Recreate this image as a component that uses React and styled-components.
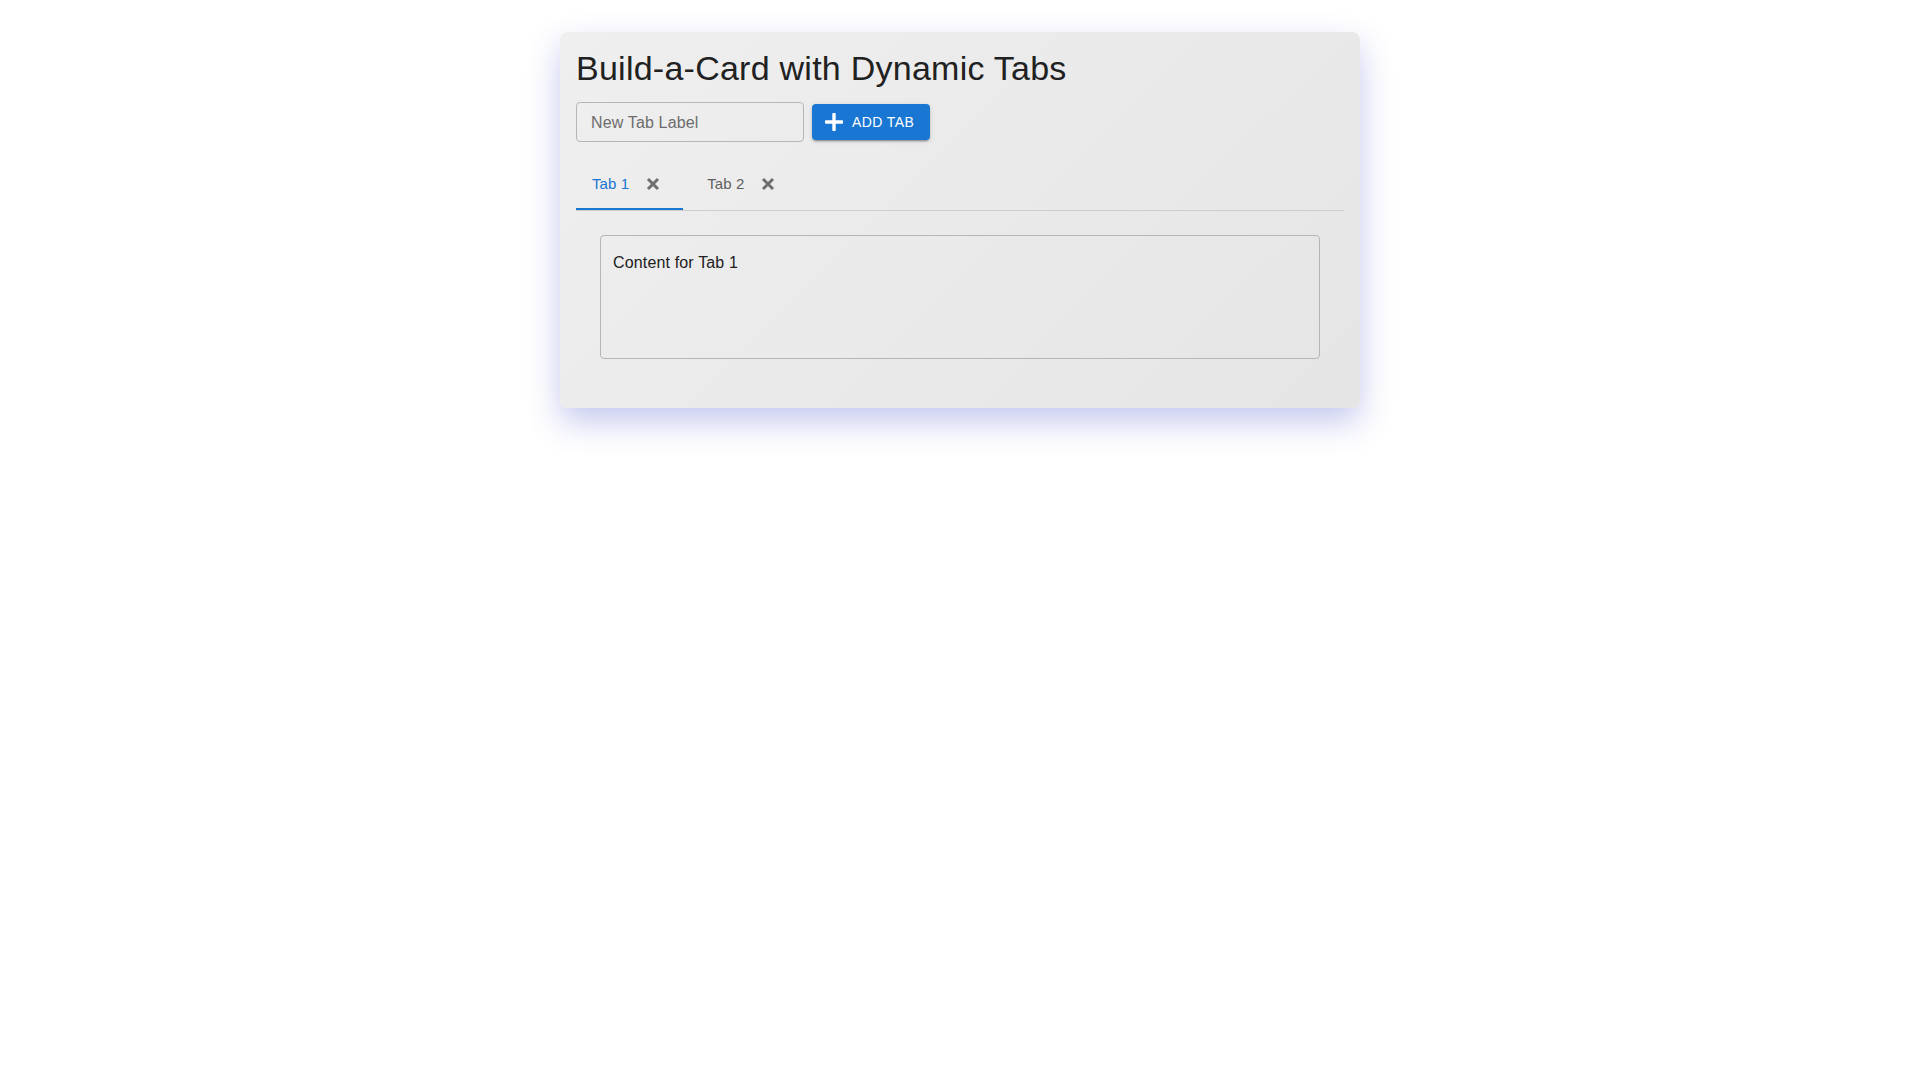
import styled, { createGlobalStyle } from "styled-components";
import { useState } from "react";

const GlobalStyle = createGlobalStyle`
  body {
    margin: 0;
    background: #ffffff;
    font-family: "Liberation Sans", Arial, sans-serif;
  }
`;

const Page = styled.div`
  display: flex;
  justify-content: center;
  padding: 32px 0 64px;
`;

const Card = styled.div`
  width: 800px;
  box-sizing: border-box;
  padding: 16px 16px 25px;
  border-radius: 8px;
  background: linear-gradient(135deg, #efefef 0%, #e5e5e5 100%);
  box-shadow: 0 14px 32px rgba(63, 75, 200, 0.3);
`;

const Title = styled.h1`
  margin: 0 0 14px;
  font-size: 34px;
  font-weight: 400;
  line-height: 40px;
  letter-spacing: 0.25px;
  color: #212121;
`;

const Toolbar = styled.div`
  display: flex;
  align-items: center;
  gap: 8px;
  margin-bottom: 20px;
`;

const Input = styled.input`
  width: 228px;
  height: 40px;
  box-sizing: border-box;
  padding: 1px 14px 0;
  border: 1px solid #b6b6b6;
  border-radius: 4px;
  background: transparent;
  font-family: inherit;
  font-size: 16px;
  letter-spacing: 0.15px;
  color: #212121;
  outline: none;

  &::placeholder {
    color: #6c6c6c;
  }
`;

const AddButton = styled.button`
  display: flex;
  align-items: center;
  height: 36px;
  padding: 0 16px;
  border: none;
  border-radius: 4px;
  background: #1976d2;
  color: #ffffff;
  font-family: inherit;
  font-size: 14px;
  letter-spacing: 0.4px;
  text-transform: uppercase;
  cursor: pointer;
  box-shadow: 0 3px 1px -2px rgba(0, 0, 0, 0.2), 0 2px 2px 0 rgba(0, 0, 0, 0.14),
    0 1px 5px 0 rgba(0, 0, 0, 0.12);

  svg {
    margin: 0 9px 0 -3px;
  }
`;

const TabBar = styled.div`
  display: flex;
  gap: 8px;
  border-bottom: 1px solid #cdcdcd;
`;

const Tab = styled.div`
  position: relative;
  display: flex;
  align-items: center;
  height: 48px;
  box-sizing: border-box;
  padding: 0 16px 5px;
  font-size: 15px;
  letter-spacing: 0.1px;
  color: ${(p) => (p.$ativo ? "#1976d2" : "#5f5f5f")};
  cursor: pointer;

  &::after {
    content: "";
    position: absolute;
    left: 0;
    right: 0;
    bottom: 0;
    height: 2px;
    background: ${(p) => (p.$ativo ? "#1976d2" : "transparent")};
  }
`;

const CloseButton = styled.button`
  display: flex;
  align-items: center;
  justify-content: center;
  width: 28px;
  height: 28px;
  margin-left: 10px;
  padding: 0;
  border: none;
  background: transparent;
  color: #6e6e6e;
  cursor: pointer;
`;

const Panel = styled.div`
  padding: 24px;
`;

const ContentBox = styled.div`
  height: 124px;
  box-sizing: border-box;
  padding: 13px 12px 12px;
  border: 1px solid #b6b6b6;
  border-radius: 4px;
  font-size: 16px;
  line-height: 28px;
  letter-spacing: 0.15px;
  color: #212121;
`;

const PlusIcon = () => (
  <svg width="18" height="18" viewBox="0 0 18 18">
    <rect x="7.3" y="0" width="3.4" height="18" rx="0.8" fill="currentColor" />
    <rect x="0" y="7.3" width="18" height="3.4" rx="0.8" fill="currentColor" />
  </svg>
);

const XIcon = () => (
  <svg width="20" height="20" viewBox="0 0 20 20">
    <path
      d="M5 5 L15 15 M15 5 L5 15"
      stroke="currentColor"
      strokeWidth="3"
      fill="none"
    />
  </svg>
);

const App = () => {
  const [abas, setAbas] = useState([
    { id: 1, label: "Tab 1" },
    { id: 2, label: "Tab 2" },
  ]);
  const [ativa, setAtiva] = useState(1);
  const [novo, setNovo] = useState("");

  function adicionar() {
    const id = Date.now();
    const label = novo.trim() || `Tab ${abas.length + 1}`;
    setAbas((prev) => [...prev, { id, label }]);
    setAtiva(id);
    setNovo("");
  }

  function fechar(e, id) {
    e.stopPropagation();
    const resto = abas.filter((a) => a.id !== id);
    setAbas(resto);
    if (ativa === id && resto.length) setAtiva(resto[0].id);
  }

  const atual = abas.find((a) => a.id === ativa);

  return (
    <>
      <GlobalStyle />
      <Page>
        <Card>
          <Title>Build-a-Card with Dynamic Tabs</Title>
          <Toolbar>
            <Input
              placeholder="New Tab Label"
              value={novo}
              onChange={(e) => setNovo(e.target.value)}
            />
            <AddButton onClick={adicionar}>
              <PlusIcon />
              Add Tab
            </AddButton>
          </Toolbar>

          <TabBar>
            {abas.map((aba) => (
              <Tab key={aba.id} $ativo={aba.id === ativa} onClick={() => setAtiva(aba.id)}>
                {aba.label}
                <CloseButton onClick={(e) => fechar(e, aba.id)}>
                  <XIcon />
                </CloseButton>
              </Tab>
            ))}
          </TabBar>

          {atual && (
            <Panel>
              <ContentBox>Content for {atual.label}</ContentBox>
            </Panel>
          )}
        </Card>
      </Page>
    </>
  );
};

export default App;
